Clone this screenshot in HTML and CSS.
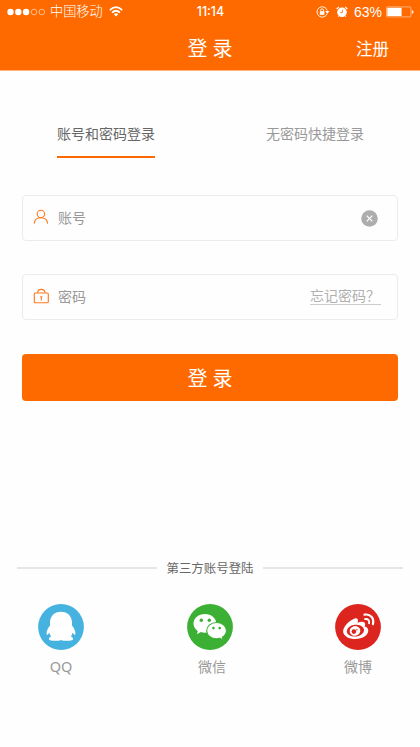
FILE: index.html
```html
<!DOCTYPE html>
<html lang="zh-CN">
<head>
<meta charset="utf-8">
<meta name="viewport" content="width=device-width, initial-scale=1">
<title>登录</title>
<link rel="stylesheet" href="styles.css">
</head>
<body>
<header class="header">
  <div class="status">
    <div class="status-left">
      <svg class="signal" width="39" height="8" viewBox="0 0 39 8"><g fill="#fff"><circle cx="3.5" cy="4" r="3.2"/><circle cx="11.3" cy="4" r="3.2"/><circle cx="19.1" cy="4" r="3.2"/></g><g fill="none" stroke="#ffd0ad" stroke-width=".8"><circle cx="27" cy="4" r="2.8"/><circle cx="34.8" cy="4" r="2.8"/></g></svg>
      <span class="carrier">中国移动</span>
      <svg class="wifi" width="14" height="11" viewBox="0 0 14 11"><g fill="none" stroke="#fff" stroke-width="1.7"><path d="M.8 4.1Q7-1.8 13.2 4.1"/><path d="M3.1 6.6Q7 2.9 10.9 6.6"/></g><path d="M4.7 8.1Q7 6.2 9.3 8.1L7 10.5z" fill="#fff"/></svg>
    </div>
    <span class="time">11:14</span>
    <div class="status-right">
      <svg width="14" height="12" viewBox="0 0 14 12"><path d="M11.2 7.4A5.2 5.2 0 1 1 11.2 4.5" fill="none" stroke="#fff" stroke-width=".9"/><path d="M9.2 5.1h4.2l-2.1 2.7z" fill="#fff"/><rect x="3.8" y="5.2" width="4.6" height="3.6" fill="#fff"/><path d="M4.7 5.4V4.2a1.4 1.4 0 0 1 2.8 0v1.2" fill="none" stroke="#fff" stroke-width=".9"/></svg>
      <svg class="alarm" width="12" height="12" viewBox="0 0 12 12"><circle cx="6" cy="6.3" r="4.8" fill="#fff"/><path d="M.7 3 2.9 .9M9.1 .9l2.2 2.1" stroke="#fff" stroke-width="1.2"/><path d="M3 9.8l-.8 1M9 9.800l.8 1" stroke="#fff" stroke-width=".9"/><path d="M6.4 3.700v2.900H4.300" fill="none" stroke="#ff6a00" stroke-width=".8"/></svg>
      <span class="percent">63%</span>
      <svg width="28" height="12" viewBox="0 0 28 12"><rect x=".5" y=".9" width="24.4" height="10" rx="1" fill="none" stroke="#ffc59b" stroke-width=".8"/><rect x="1.3" y="1.8" width="14.3" height="8.2" fill="#fff"/><path d="M25.8 4q1.8.4 1.8 2t-1.8 2z" fill="#ffe5d3"/></svg>
    </div>
  </div>
  <div class="navbar">
    <h1 class="title"><span>登</span><span>录</span></h1>
    <a class="register">注册</a>
  </div>
</header>

<main class="main">
  <nav class="tabs">
    <a class="tab tab-active">账号和密码登录</a>
    <a class="tab">无密码快捷登录</a>
  </nav>

  <form class="form">
    <div class="field">
      <svg class="field-icon" width="16" height="16" viewBox="0 0 16 16" fill="none" stroke="#ff781c" stroke-width="1.1"><circle cx="7.9" cy="5" r="3.7"/><path d="M1.2 14.6C1.5 10.9 4.3 8.8 7.9 8.8s6.4 2.1 6.7 5.8"/></svg>
      <span class="placeholder">账号</span>
      <svg class="clear" width="17" height="17" viewBox="0 0 17 17"><circle cx="8.5" cy="8.5" r="8.3" fill="#adadad"/><path d="M5.7 5.7l5.6 5.6M11.3 5.7l-5.6 5.6" stroke="#fff" stroke-width="1.2"/></svg>
    </div>
    <div class="field">
      <svg class="field-icon" width="16" height="16" viewBox="0 0 16 16" fill="none" stroke="#ff781c" stroke-width="1.1"><rect x="1.3" y="5" width="14" height="9.8" rx="1"/><path d="M4.6 4.8c.3-4.6 7.1-4.6 7.4 0M8.3 8.6v4M7.2 8.7h2.2"/></svg>
      <span class="placeholder">密码</span>
      <a class="forgot">忘记密码？</a>
    </div>
    <div class="submit"><span>登</span><span>录</span></div>
  </form>

  <section class="third">
    <div class="divider"><span class="divider-text">第三方账号登陆</span></div>
    <div class="providers">
      <a class="provider">
        <svg width="46" height="46" viewBox="0 0 46 46"><circle cx="23" cy="23" r="22.9" fill="#45b2df"/><path d="M23 7.7c-6.7 0-11 4.7-11 10.6v3.2C9.8 24.3 8.4 27 8.6 30c.1 1.5 1.2.9 2.8-1.2.3 1.4.8 2.6 1.7 3.7-2 .8-2.600 2-1.900 3.200.9 1.400 9.200 1.600 11.800.2 2.600 1.400 10.900 1.200 11.800-.2.700-1.200.1-2.400-1.900-3.200.9-1.100 1.400-2.300 1.700-3.700 1.600 2.100 2.700 2.700 2.800 1.200.2-3-1.200-5.700-3.400-8.500v-3.200C34 12.400 29.700 7.700 23 7.700z" fill="#fff"/></svg>
        <span class="provider-name name-qq">QQ</span>
      </a>
      <a class="provider">
        <svg width="46" height="46" viewBox="0 0 46 46"><circle cx="23" cy="23" r="22.9" fill="#3cb034"/><path d="M17.9 10C11.6 10 6.5 14.2 6.5 19.5c0 3 1.7 5.7 4.3 7.4l-.9 3.3 4-2.100c1.200.4 2.600.6 4 .6 6.300 0 11.400-4.100 11.400-9.300S24.200 10 17.900 10z" fill="#fff"/><circle cx="14.3" cy="16.3" r="1.7" fill="#3cb034"/><circle cx="22.3" cy="16.3" r="1.7" fill="#3cb034"/><path d="M29.6 18.5c-5.500 0-9.900 3.600-9.900 8.200s4.400 8.100 9.900 8.100c1.200 0 2.300-.2 3.300-.5l3.300 1.900-.8-3c2.400-1.500 4-3.800 4-6.500 0-4.600-4.400-8.200-9.800-8.200z" fill="#fff" stroke="#3cb034" stroke-width="1.1"/><circle cx="26.4" cy="24.1" r="1.3" fill="#3cb034"/><circle cx="32.7" cy="24.1" r="1.3" fill="#3cb034"/></svg>
        <span class="provider-name name-wechat">微信</span>
      </a>
      <a class="provider">
        <svg width="46" height="46" viewBox="0 0 46 46"><circle cx="23" cy="23" r="22.9" fill="#db251e"/><path d="M20.8 14.2c-3.900.5-12.700 7.300-12.700 13.100 0 4.900 6 7.800 12.200 7.800 7.400 0 13-4 13-8.300 0-2.500-1.900-3.700-3.500-4.200.9-2.600.3-4.300-1.500-4.700-1.800-.4-3.900.2-5.700.9.700-2.600.4-4.900-1.800-4.600z" fill="#fff"/><ellipse cx="20.4" cy="26.6" rx="8.7" ry="5.9" transform="rotate(-7 20.4 26.6)" fill="#db251e"/><ellipse cx="20" cy="26.9" rx="5.4" ry="4.8" transform="rotate(-15 20 26.9)" fill="#fff"/><circle cx="18.9" cy="27.6" r="2.3" fill="#db251e"/><circle cx="21.9" cy="25.7" r=".7" fill="#db251e"/><g fill="none" stroke="#fff" stroke-linecap="round"><path d="M29.5 10.7c5.700-1.200 10 3.500 8.400 9.400" stroke-width="2.2"/><path d="M30 15.1c2.900-.5 4.700 1.400 4.100 4.100" stroke-width="1.9"/></g></svg>
        <span class="provider-name">微博</span>
      </a>
    </div>
  </section>
</main>
</body>
</html>
```

FILE: styles.css
```css
* {
  box-sizing: border-box;
}

body {
  margin: 0;
  min-height: 747px;
  background: #fefefe;
  color: #999;
  font-family: "Liberation Sans", "Noto Sans CJK SC", sans-serif;
  font-size: 14px;
}

svg {
  display: block;
  flex: none;
}

.header {
  height: 71px;
  background: #ff6a00;
  border-bottom: 1px solid #ffb27a;
  color: #fff;
}

.status {
  display: grid;
  grid-template-columns: 1fr auto 1fr;
  align-items: center;
  height: 23px;
  padding: 0 6px 0 7px;
}

.status-left,
.status-right {
  display: flex;
  align-items: center;
}

.status-right {
  justify-content: flex-end;
}

.carrier {
  margin: 0 6px 0 4px;
  padding-top: 1px;
  font-size: 13.2px;
  font-weight: 300;
  line-height: 22px;
}

.time {
  font-family: Inter, "Liberation Sans", sans-serif;
  font-size: 12.4px;
  font-weight: 500;
  line-height: 17px;
}

.alarm {
  margin: 0 6px 0 6px;
}

.percent {
  margin-right: 4px;
  font-size: 14px;
}

.navbar {
  display: grid;
  grid-template-columns: 1fr auto 1fr;
  align-items: center;
  height: 47px;
  padding: 3px 31px 0;
}

.title {
  grid-column: 2;
  display: flex;
  gap: 5px;
  margin: 0;
  padding-top: 2px;
  font-size: 20px;
  font-weight: 400;
  line-height: 30px;
}

.register {
  justify-self: end;
  padding-top: 1px;
  font-size: 16.5px;
  line-height: 24px;
}

.main {
  padding: 50px 22px 0;
}

.tabs {
  display: flex;
  justify-content: space-between;
  padding: 0 34px 0 35px;
}

.tab {
  height: 37px;
  line-height: 26px;
  border-bottom: 2px solid transparent;
}

.tab-active {
  color: #666;
  border-color: #ff6a00;
}

.form {
  display: flex;
  flex-direction: column;
  padding-top: 37px;
}

.field {
  display: flex;
  align-items: center;
  height: 46px;
  margin-bottom: 33px;
  padding: 0 16px 0 10px;
  border: 1px solid #ebebeb;
  border-radius: 4px;
}

.field-icon {
  margin-bottom: 2px;
}

.placeholder {
  flex: 1;
  margin-left: 9px;
  padding-bottom: 2px;
}

.clear {
  margin-right: 3px;
}

.forgot {
  width: 71px;
  height: 18px;
  margin-bottom: 3px;
  border-bottom: 1px solid #ccc;
  color: #b0b0b0;
  line-height: 19px;
  white-space: nowrap;
}

.submit {
  display: flex;
  justify-content: center;
  gap: 5px;
  height: 47px;
  margin-top: 1px;
  border-radius: 4px;
  background: #ff6a00;
  color: #fff;
  font-size: 20px;
  line-height: 50px;
}

.third {
  padding-top: 157px;
}

.divider {
  display: flex;
  align-items: center;
  gap: 9px;
  height: 20px;
  margin: 0 -5px;
}

.divider::before,
.divider::after {
  content: "";
  flex: 1;
  height: 2px;
  background: #e6e6e6;
}

.divider-text {
  color: #666;
  font-size: 12.45px;
}

.providers {
  display: flex;
  justify-content: space-between;
  margin: 26px -5px 0 -6px;
}

.provider {
  display: flex;
  flex-direction: column;
  align-items: center;
  width: 90px;
}

.provider-name {
  margin-top: 6px;
  font-family: "Noto Sans", "Noto Sans CJK SC", sans-serif;
  line-height: 21px;
}

.name-qq {
  font-size: 14.5px;
}

.name-wechat {
  padding-left: 5px;
}
```
